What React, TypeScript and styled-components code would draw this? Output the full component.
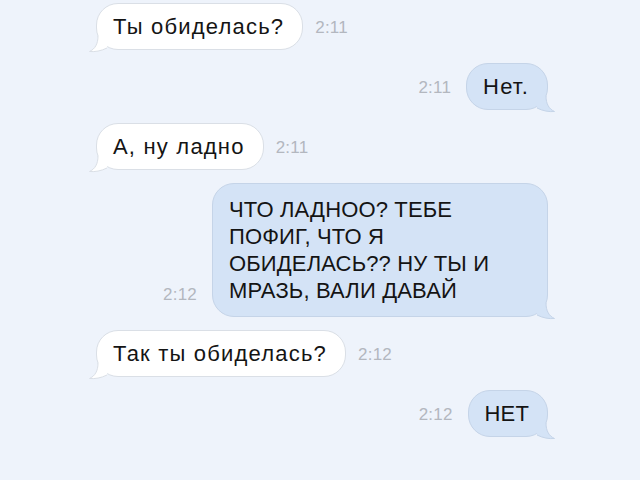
import React from "react";
import styled, {createGlobalStyle} from "styled-components";

const GlobalStyle = createGlobalStyle`
    html, body {
        margin: 0;
        padding: 0;
        background: #eef3fb;
    }
    body {
        font-family: "Liberation Sans", Arial, sans-serif;
    }
`;

const Chat = styled.div`
    width: 640px;
    height: 480px;
    box-sizing: border-box;
    padding: 3px 92px 0 96px;
    display: flex;
    flex-direction: column;
    gap: 13px;
    overflow: hidden;
    background: #eef3fb;
`;

const Row = styled.div<{$out?: boolean}>`
    display: flex;
    align-items: flex-end;
    justify-content: flex-start;
    flex-direction: ${(p) => (p.$out ? "row-reverse" : "row")};
    gap: ${(p) => (p.$out ? "15px" : "12px")};
`;

const Bubble = styled.div<{$out?: boolean; $pad?: number; $caps?: boolean; $width?: number}>`
    position: relative;
    box-sizing: border-box;
    ${(p) => (p.$width ? `width: ${p.$width}px;` : "")}
    padding: ${(p) => p.$pad ?? 9}px 18px ${(p) => p.$pad ?? 9}px 16px;
    border-radius: 22px;
    font-size: 22px;
    line-height: 27px;
    letter-spacing: ${(p) => (p.$caps ? "0.15px" : "1.2px")};
    color: #141414;
    background: ${(p) => (p.$out ? "#d4e3f6" : "#ffffff")};
    border: 1px solid ${(p) => (p.$out ? "#c5d4e8" : "#dadfe6")};
    white-space: nowrap;
`;

const Time = styled.span`
    font-size: 17px;
    color: #b3b7bf;
    margin-bottom: 12px;
    letter-spacing: 0.2px;
`;

const TailSvg = styled.svg<{$out?: boolean}>`
    position: absolute;
    bottom: -4px;
    width: 20px;
    height: 17px;
    ${(p) => (p.$out ? "right: -8px; transform: scaleX(-1);" : "left: -8px;")}
`;

const Tail = ({out}: {out?: boolean}) => {
    const fill = out ? "#d4e3f6" : "#ffffff";
    const stroke = out ? "#c5d4e8" : "#dadfe6";
    return (
        <TailSvg $out={out} viewBox="0 0 20 17">
            <path d="M9 0 C9 8 6 13 0.5 15.5 C6 16 12 15 18 12 L20 0 Z" fill={fill} />
            <path
                d="M9 0 C9 8 6 13 0.5 15.5 C6 16 12 15 18 12"
                fill="none"
                stroke={stroke}
                strokeWidth="1"
            />
        </TailSvg>
    );
};

type Message = {
    lines: string[];
    time: string;
    out?: boolean;
    pad?: number;
    caps?: boolean;
    width?: number;
};

const messages: Message[] = [
    {lines: ["Ты обиделась?"], time: "2:11"},
    {lines: ["Нет."], time: "2:11", out: true},
    {lines: ["А, ну ладно"], time: "2:11"},
    {
        lines: ["ЧТО ЛАДНОО? ТЕБЕ", "ПОФИГ, ЧТО Я", "ОБИДЕЛАСЬ?? НУ ТЫ И", "МРАЗЬ, ВАЛИ ДАВАЙ"],
        time: "2:12",
        out: true,
        pad: 12,
        caps: true,
        width: 336,
    },
    {lines: ["Так ты обиделась?"], time: "2:12"},
    {lines: ["НЕТ"], time: "2:12", out: true, caps: true},
];

export default function App() {
    return (
        <>
            <GlobalStyle />
            <Chat>
                {messages.map((m, i) => (
                    <Row key={i} $out={m.out}>
                        <Bubble $out={m.out} $pad={m.pad} $caps={m.caps} $width={m.width}>
                            {m.lines.map((l, j) => (
                                <div key={j}>{l}</div>
                            ))}
                            <Tail out={m.out} />
                        </Bubble>
                        <Time>{m.time}</Time>
                    </Row>
                ))}
            </Chat>
        </>
    );
}
